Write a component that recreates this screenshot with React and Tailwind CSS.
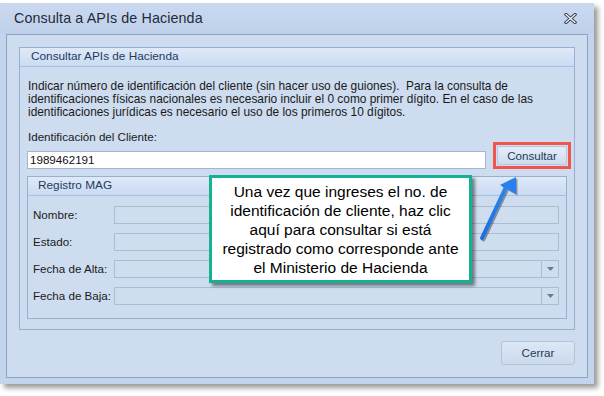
import React from 'react';

const ui = { fontFamily: '"Liberation Sans", Arial, sans-serif' };

function CloseIcon() {
  return (
    <svg width="13" height="11" viewBox="0 0 13 11">
      <path d="M2 1.5 L11 9.5 M11 1.5 L2 9.5" stroke="#3b4656" strokeWidth="3.2" strokeLinecap="square" />
      <path d="M2 1.5 L11 9.5 M11 1.5 L2 9.5" stroke="#ffffff" strokeWidth="1.2" strokeLinecap="square" />
    </svg>
  );
}

function GroupHeader({ title, pl }) {
  return (
    <div
      className={`h-[19px] flex items-center border-b border-[#a9bfdc] bg-gradient-to-b from-[#dfe9f7] to-[#c9dbf3] text-[#1e3a5f] text-[11.8px] ${pl}`}
    >
      {title}
    </div>
  );
}

function Field({ label, combo }) {
  return (
    <div className="flex items-center h-[18px]">
      <div className="w-[86px] pl-[5px] text-[11.6px] text-[#1a1a1a]">{label}</div>
      <div className="flex-1 h-[18px] border border-[#a9bdd6] bg-[#cfdeef] flex justify-end">
        {combo && (
          <div className="w-[17px] h-full border-l border-[#a9bdd6] flex items-center justify-center">
            <svg width="7" height="4" viewBox="0 0 7 4">
              <path d="M0 0 H7 L3.5 4 Z" fill="#6b7a8c" />
            </svg>
          </div>
        )}
      </div>
    </div>
  );
}

export default function App() {
  return (
    <div className="w-[604px] h-[396px] bg-white relative overflow-hidden" style={ui}>
      <div className="mt-[3px] w-[594px] h-[381px] bg-[#c3d4ed] flex flex-col shadow-[4px_4px_5px_rgba(0,0,0,0.4)]">
        {/* title bar */}
        <div className="h-[31px] flex items-center justify-between pl-[14px] pr-[17px] bg-gradient-to-b from-[#cad9f0] to-[#bfd0ea]">
          <span className="text-[14.3px] text-[#1f2b3a] tracking-[0.1px]">Consulta a APIs de Hacienda</span>
          <CloseIcon />
        </div>

        {/* client area */}
        <div className="mx-[6px] mb-[6px] flex-1 border border-[#8aa3c2] bg-[#cddcee] flex flex-col pt-[12px] pl-[12px] pr-[12px]">
          <div className="h-[283px] border border-[#98afcd] flex flex-col">
            <GroupHeader title="Consultar APIs de Hacienda" pl="pl-[11px]" />
            <div className="pl-[8px] pr-[5px] pt-[13px] text-[11.6px] leading-[13px] text-[#1a1a1a] whitespace-nowrap">
              <div className="text-[11.9px]">
                <p>Indicar número de identificación del cliente (sin hacer uso de guiones).&nbsp; Para la consulta de</p>
                <p>identificaciones físicas nacionales es necesario incluir el 0 como primer dígito. En el caso de las</p>
                <p>identificaciones jurídicas es necesario el uso de los primeros 10 dígitos.</p>
              </div>
              <p className="mt-[11px]">Identificación del Cliente:</p>
            </div>
            <div className="flex items-end pl-[7px] pr-[3px] mt-[-1px]">
              <div className="flex-1 h-[18px] border border-[#a3b6cf] bg-white flex items-center pl-[2px] text-[11.6px] text-[#111]">
                1989462191
              </div>
              <div className="ml-[7px] w-[78px] h-[27px] border-[3px] border-[#f2554c] flex p-[1px]">
                <div className="flex-1 rounded-[2px] border border-[#b7c8de] bg-gradient-to-b from-[#e4edf9] to-[#cfdcee] flex items-center justify-center text-[11.6px] text-[#1e3a5f]">
                  Consultar
                </div>
              </div>
            </div>

            {/* Registro MAG */}
            <div className="mt-[7px] mx-[7px] h-[143px] border border-[#98afcd] flex flex-col">
              <GroupHeader title="Registro MAG" pl="pl-[10px]" />
              <div className="flex flex-col gap-[9px] pt-[10px] pr-[7px]">
                <Field label="Nombre:" />
                <Field label="Estado:" />
                <Field label="Fecha de Alta:" combo />
                <Field label="Fecha de Baja:" combo />
              </div>
            </div>
          </div>

          <div className="flex justify-end mt-[11px]">
            <div className="w-[74px] h-[24px] rounded-[3px] border border-[#b3c5dd] bg-gradient-to-b from-[#dde7f5] to-[#cbd9ec] flex items-center justify-center text-[11.6px] text-[#1e3a5f]">
              Cerrar
            </div>
          </div>
        </div>
      </div>

      {/* callout */}
      <div className="absolute left-[209px] top-[175px] w-[263px] h-[108px] bg-white border-[3px] border-[#16b193] shadow-[3px_3px_3px_rgba(0,0,0,0.45)] pt-[4px] text-center text-[15.5px] leading-[19px] text-black whitespace-nowrap">
        <p>Una vez que ingreses el no. de</p>
        <p>identificación de cliente, haz clic</p>
        <p>aquí para consultar si está</p>
        <p>registrado como corresponde ante</p>
        <p>el Ministerio de Hacienda</p>
      </div>

      {/* arrow */}
      <svg className="absolute left-[470px] top-[165px]" width="60" height="85" viewBox="0 0 60 85">
        <defs>
          <linearGradient id="ab" x1="0" y1="1" x2="1" y2="0">
            <stop offset="0" stopColor="#1b6fe0" />
            <stop offset="1" stopColor="#2a86f0" />
          </linearGradient>
        </defs>
        <g transform="translate(1.5,1.5)" opacity="0.35">
          <path d="M12 73 L36 22" stroke="#000" strokeWidth="4" strokeLinecap="round" />
          <path d="M30 20 L46 12 L46 29 Z" fill="#000" />
        </g>
        <path d="M12 73 L36 22" stroke="url(#ab)" strokeWidth="4" strokeLinecap="round" />
        <path d="M30 20 L46 12 L46 29 Z" fill="#2780ec" />
      </svg>
    </div>
  );
}
